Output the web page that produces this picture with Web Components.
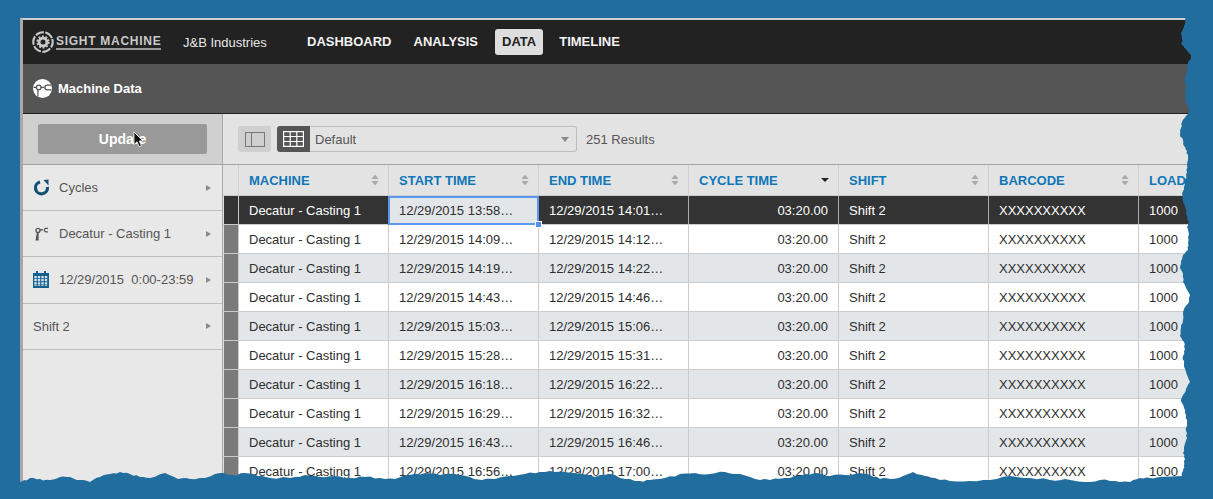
<!DOCTYPE html>
<html>
<head>
<meta charset="utf-8">
<title>Machine Data</title>
<style>
html, body { margin: 0; height: 499px; overflow: hidden; background: #216d9e; }
body { font-family: "Liberation Sans", Arial, sans-serif; font-size: 13px; position: relative; }
</style>
</head>
<body>
<sm-app></sm-app>

<script>
const SORT_ARROWS = `<svg width="8" height="12" viewBox="0 0 8 12"><path d="M4 0.5 L7.5 5 H0.5 Z M4 11.5 L0.5 7 H7.5 Z" fill="#a9a9a9"/></svg>`;

class SmTopbar extends HTMLElement {
  constructor() {
    super();
    this.attachShadow({ mode: "open" });
    this.shadowRoot.innerHTML = `
  <style>
:host { display: flex; align-items: center; height: 44px; background: #222; color: #fff; }
.logo { display: flex; align-items: center; box-sizing: border-box; padding-left: 9px; width: 160px; }
.logo svg { flex: none; }
.brand {
	margin-left: 2px;
	font-size: 12px;
	font-weight: 700;
	letter-spacing: 0.72px;
	line-height: 13px;
	color: #c9c9c9;
	border-bottom: 2px solid #9a9a9a;
	white-space: nowrap;
}
.org { width: 118px; font-size: 13px; color: #e6e6e6; white-space: nowrap; }
nav { display: flex; align-items: center; gap: 10px; }
nav a { font-weight: 700; font-size: 13px; color: #f2f2f2; padding: 5px 6px; line-height: 16px; border-radius: 3px; }
nav a.on { background: #dedede; color: #222; padding: 5px 7px; margin-left: 1px; }
  </style>
  <div class="logo">
    <svg width="22" height="22" viewBox="0 0 22 22" fill="none">
      <circle cx="11" cy="11" r="9.7" stroke="#c9c9c9" stroke-width="2.1" stroke-dasharray="8.7 1.46" transform="rotate(-18 11 11)"/>
      <circle cx="11" cy="11" r="3.9" stroke="#c9c9c9" stroke-width="2.8"/>
      <circle cx="11" cy="11" r="5.7" stroke="#c9c9c9" stroke-width="1.8" stroke-dasharray="2 1.58"/>
    </svg>
    <span class="brand">SIGHT MACHINE</span>
  </div>
  <span class="org">J&amp;B Industries</span>
  <nav>
    <a>DASHBOARD</a>
    <a>ANALYSIS</a>
    <a class="on">DATA</a>
    <a>TIMELINE</a>
  </nav>
`;
  }
}

class SmSubbar extends HTMLElement {
  constructor() {
    super();
    this.attachShadow({ mode: "open" });
    this.shadowRoot.innerHTML = `
  <style>
:host {
	display: flex;
	align-items: center;
	gap: 6px;
	box-sizing: border-box;
	height: 50px;
	padding-left: 10px;
	background: #555;
	border-bottom: 1px solid #1e1e1e;
	color: #fff;
	font-weight: 700;
	font-size: 13px;
}
  </style>
  <svg width="19" height="19" viewBox="0 0 19 19">
    <circle cx="9.5" cy="9.5" r="9.5" fill="#fff"/>
    <path d="M0.6 8.4 H3.4 M8 8.4 H11.4" fill="none" stroke="#555" stroke-width="1.2"/>
    <circle cx="5.7" cy="8.4" r="2.3" fill="#fff" stroke="#555" stroke-width="1.2"/>
    <path d="M4.9 10.8 V17.5" fill="none" stroke="#555" stroke-width="1.2"/>
    <path d="M18.4 6.2 H14.2 A2.3 2.3 0 0 0 14.2 10.8 H18.4" fill="none" stroke="#555" stroke-width="1.3"/>
  </svg>
  <slot></slot>
`;
  }
}

class SmSideItem extends HTMLElement {
  constructor() {
    super();
    this.attachShadow({ mode: "open" });
    this.shadowRoot.innerHTML = `
  <style>
:host {
	display: flex;
	align-items: center;
	box-sizing: border-box;
	height: 46.2px;
	padding: 0 11px 0 10px;
	border-bottom: 1px solid #bdbdbd;
	color: #555;
	font-size: 13px;
}
.ico { display: flex; width: 26px; flex: none; }
.ico.none { display: none; }
.txt { flex: 1; white-space: nowrap; }
.arrow { width: 0; height: 0; border-left: 5px solid #8a8a8a; border-top: 3.5px solid transparent; border-bottom: 3.5px solid transparent; }
  </style>
  <span class="ico"><slot name="icon"></slot></span>
  <span class="txt"><slot></slot></span>
  <span class="arrow"></span>
`;
    const slot = this.shadowRoot.querySelector('slot[name="icon"]');
    if (!this.querySelector('[slot="icon"]')) slot.parentElement.classList.add("none");
  }
}

class SmSidebar extends HTMLElement {
  constructor() {
    super();
    this.attachShadow({ mode: "open" });
    this.shadowRoot.innerHTML = `
  <style>
:host { display: block; box-sizing: border-box; width: 200px; flex: none; background: #e8e8e8; border-right: 1px solid #a9a9a9; }
.top { box-sizing: border-box; height: 51px; padding: 10px 15px; background: #d0d0d0; border-bottom: 1px solid #a3a3a3; }
.update {
	display: flex;
	align-items: center;
	justify-content: center;
	position: relative;
	height: 30px;
	background: #999;
	border-radius: 2px;
	color: #fff;
	font-weight: 700;
	font-size: 14px;
}
.cursor { position: absolute; left: 95px; top: 7px; }
  </style>
  <div class="top">
    <div class="update">Update
      <svg class="cursor" width="12" height="17" viewBox="0 0 12 17">
        <path d="M1 1 V13.5 L4 10.8 L6.2 15.6 L8.4 14.6 L6.2 10 H10 Z" fill="#111" stroke="#fff" stroke-width="0.8"/>
      </svg>
    </div>
  </div>
  <slot></slot>
`;
  }
}

class SmToolbar extends HTMLElement {
  constructor() {
    super();
    this.attachShadow({ mode: "open" });
    this.shadowRoot.innerHTML = `
  <style>
:host {
	display: flex;
	align-items: center;
	box-sizing: border-box;
	height: 51px;
	padding: 0 0 0 15px;
	background: #e3e3e3;
	border-bottom: 1px solid #a3a3a3;
	color: #555;
	font-size: 13px;
}
.toggle { display: flex; align-items: center; justify-content: center; width: 33px; height: 26px; background: #cfcfcf; border-radius: 3px; }
.select { display: flex; align-items: center; height: 26px; margin-left: 6px; }
.grid { display: flex; align-items: center; justify-content: center; width: 33px; height: 26px; background: #555; border-radius: 3px 0 0 3px; }
.field {
	display: flex;
	align-items: center;
	justify-content: space-between;
	box-sizing: border-box;
	width: 267px;
	height: 26px;
	padding: 1px 7px 0 5px;
	border: 1px solid #bdbdbd;
	border-left: 0;
	border-radius: 0 3px 3px 0;
}
.caret { width: 0; height: 0; border-top: 5px solid #8a8a8a; border-left: 4.5px solid transparent; border-right: 4.5px solid transparent; }
.count { margin-left: 9px; padding-top: 1px; }
  </style>
  <span class="toggle">
    <svg width="20" height="15" viewBox="0 0 20 15" fill="none" stroke="#777"><rect x="0.5" y="0.5" width="19" height="14"/><path d="M6.5 0.5 V14.5"/></svg>
  </span>
  <span class="select">
    <span class="grid">
      <svg width="21" height="16" viewBox="0 0 21 16" fill="none" stroke="#fff" stroke-width="1.2"><rect x="0.6" y="0.6" width="19.8" height="14.8"/><path d="M7.2 0.6 V15.4 M13.8 0.6 V15.4 M0.6 5.5 H20.4 M0.6 10.5 H20.4"/></svg>
    </span>
    <span class="field">Default<span class="caret"></span></span>
  </span>
  <span class="count">251 Results</span>
`;
  }
}

class SmTable extends HTMLElement {
  constructor() {
    super();
    this.attachShadow({ mode: "open" });
  }

  connectedCallback() {
    const times = [
      ["13:58", "14:01"], ["14:09", "14:12"], ["14:19", "14:22"], ["14:43", "14:46"], ["15:03", "15:06"],
      ["15:28", "15:31"], ["16:18", "16:22"], ["16:29", "16:32"], ["16:43", "16:46"], ["16:56", "17:00"],
    ];
    const heads = ["MACHINE", "START TIME", "END TIME", "CYCLE TIME", "SHIFT", "BARCODE", "LOAD"];

    const head = heads.map((h) => {
      let mark = SORT_ARROWS;
      if (h === "CYCLE TIME") mark = `<span class="down"></span>`;
      if (h === "LOAD") mark = "";
      return `<div class="th">${h}${mark}</div>`;
    }).join("");

    const rows = times.map((t, i) => `
      <div class="row ${i === 0 ? "sel" : i % 2 === 0 ? "alt" : ""}">
        <div class="ind"></div>
        <div class="td">Decatur - Casting 1</div>
        <div class="td ${i === 0 ? "focus" : ""}">12/29/2015 ${t[0]}…${i === 0 ? '<i class="handle"></i>' : ""}</div>
        <div class="td">12/29/2015 ${t[1]}…</div>
        <div class="td num">03:20.00</div>
        <div class="td">Shift 2</div>
        <div class="td">XXXXXXXXXX</div>
        <div class="td">1000</div>
      </div>`).join("");

    this.shadowRoot.innerHTML = `
  <style>
:host { display: block; font-size: 13px; color: #2e2e2e; }
.head, .row { display: grid; grid-template-columns: 16px repeat(6, 150px) 100px; }
.head { height: 31px; background: #e3e3e3; border-bottom: 1px solid #ccc; box-sizing: border-box; }
.corner { border-right: 1px solid #d0d0d0; }
.th {
	display: flex;
	align-items: center;
	justify-content: space-between;
	box-sizing: border-box;
	padding: 0 9px 0 10px;
	border-right: 1px solid #d0d0d0;
	color: #0f77b8;
	font-weight: 700;
	white-space: nowrap;
}
.down { width: 0; height: 0; border-top: 4px solid #222; border-left: 4px solid transparent; border-right: 4px solid transparent; }
.row { box-sizing: border-box; height: 29px; background: #fff; border-bottom: 1px solid #ccc; }
.row.alt { background: #e3e6e9; }
.row.sel { background: #333; color: #fff; border-bottom-color: #ccc; }
.ind { background: #7a7a7a; border-left: 1px solid #ddd; border-right: 1px solid #ccc; }
.row.sel .ind { background: #333; }
.td {
	display: flex;
	align-items: center;
	box-sizing: border-box;
	padding: 0 10px;
	border-right: 1px solid #ccc;
	white-space: nowrap;
}
.row.sel .td { border-right-color: #aaa; }
.td.num { justify-content: flex-end; }
.row .td.focus {
	position: relative;
	background: #e3e6e9;
	color: #2e2e2e;
	border: 2px solid #5b96f0;
	padding: 0 9px;
	margin: 0 0 -1px -1px;
}
.handle { position: absolute; right: -5px; bottom: -5px; width: 5px; height: 5px; background: #4f8ff0; border: 1px solid #fff; }
  </style>
  <div class="head"><div class="corner"></div>${head}</div>
  ${rows}
`;
  }
}

// torn paper edge, points traced from the picture, then roughened
class SmTornEdge extends HTMLElement {
  constructor() {
    super();
    this.attachShadow({ mode: "open" });
    const right = [[1185,16],[1185,24],[1183,29],[1181,34],[1182,39],[1182,45],[1186,49],[1190,54],[1191,58],[1188,63],[1187,70],[1185,78],[1186,86],[1185,94],[1186,102],[1189,108],[1189,111],[1186,116],[1182,122],[1181,128],[1180,135],[1183,140],[1184,146],[1187,151],[1188,157],[1187,165],[1187,172],[1185,180],[1184,187],[1182,194],[1183,200],[1185,207],[1186,214],[1189,222],[1187,227],[1189,234],[1188,243],[1188,250],[1183,255],[1181,261],[1180,268],[1183,274],[1183,282],[1186,288],[1190,295],[1189,302],[1185,307],[1183,314],[1183,320],[1181,328],[1180,336],[1184,342],[1185,349],[1183,356],[1184,364],[1186,372],[1190,382],[1186,389],[1183,395],[1181,401],[1184,408],[1186,415],[1187,423],[1186,431],[1187,438],[1184,447],[1183,453],[1185,459],[1184,466],[1183,471],[1182,476]];
    const bottom = [[1160,477],[1150,478],[1140,478],[1130,482],[1115,481],[1100,480],[1085,482],[1065,479],[1050,480],[1030,478],[1010,476],[990,480],[970,481],[950,481],[935,478],[925,476],[913,472],[903,476],[890,479],[880,479],[870,475],[860,473],[845,475],[830,476],[815,473],[800,476],[785,478],[770,480],[755,479],[740,474],[725,472],[710,474],[695,473],[680,474],[665,478],[650,480],[640,481],[625,479],[610,474],[595,477],[575,473],[555,472],[540,472],[525,474],[510,476],[495,479],[482,480],[470,477],[455,474],[440,475],[425,473],[410,475],[395,479],[380,478],[365,477],[350,478],[335,476],[320,477],[305,475],[290,478],[270,478],[258,476],[245,473],[232,475],[220,473],[205,478],[190,479],[178,479],[165,473],[150,478],[140,477],[130,474],[120,472],[110,474],[100,477],[90,482],[80,480],[70,477],[60,477],[50,480],[40,479],[30,478],[24,480],[20,482]];
    let seed = 7;
    const noise = () => {
      seed = (seed * 16807) % 2147483647;
      return (seed % 1000) / 1000 - 0.5;
    };
    const rough = (list, ax) => {
      const out = [];
      list.forEach((p, i) => {
        out.push(p);
        const q = list[i + 1];
        if (!q) return;
        for (let k = 1; k < 3; k++) {
          const x = p[0] + ((q[0] - p[0]) * k) / 3;
          const y = p[1] + ((q[1] - p[1]) * k) / 3;
          out.push(ax === "x" ? [(x + noise() * 1.6).toFixed(1), y.toFixed(1)] : [x.toFixed(1), (y + noise() * 2.2).toFixed(1)]);
        }
      });
      return out;
    };
    const pts = [...rough(right, "x"), ...rough(bottom, "y"), [20,499], [1213,499], [1213,16]].map((p) => p.join(",")).join(" ");
    this.shadowRoot.innerHTML = `
  <style>
:host { position: absolute; left: 0; top: 0; width: 1213px; height: 499px; pointer-events: none; }
svg { display: block; }
  </style>
  <svg width="1213" height="499" viewBox="0 0 1213 499"><polygon points="${pts}" fill="#216d9e"/></svg>
`;
  }
}

class SmApp extends HTMLElement {
  constructor() {
    super();
    this.attachShadow({ mode: "open" });
    this.shadowRoot.innerHTML = `
  <style>
:host { display: block; box-sizing: border-box; height: 499px; padding: 18px 0 0 20px; }
.window { box-sizing: border-box; height: 481px; width: 1193px; overflow: hidden; border-top: 2px solid #cfcfcf; border-left: 3px solid #a8a8a8; }
.main { display: flex; }
.content { flex: 1; min-width: 0; background: #fff; }
  </style>
  <div class="window">
    <sm-topbar></sm-topbar>
    <sm-subbar>Machine Data</sm-subbar>
    <div class="main">
      <sm-sidebar>
        <sm-side-item>
          <svg slot="icon" width="17" height="17" viewBox="0 0 17 17"><path d="M7 3 A6 6 0 1 0 14.4 8" fill="none" stroke="#14506f" stroke-width="3.2"/><path d="M10.5 1 L15.5 0.5 V6.5 Z" fill="#14506f"/></svg>
          Cycles
        </sm-side-item>
        <sm-side-item>
          <svg slot="icon" width="16" height="14" viewBox="0 0 16 14" fill="none" stroke="#555"><circle cx="5" cy="3.4" r="2" stroke-width="1.3"/><path d="M4 5 L2.4 13.5 H5.6 L5.6 5 Z" fill="#555" stroke="none"/><path d="M7 3 L10 2.6" stroke-width="1.4"/><path d="M15 1.4 H13 A1.7 1.7 0 0 0 13 4.8 H15" stroke-width="1.2"/></svg>
          Decatur - Casting 1
        </sm-side-item>
        <sm-side-item>
          <svg slot="icon" width="16" height="17" viewBox="0 0 16 17"><path d="M0 2 H3 V0 H5 V2 H11 V0 H13 V2 H16 V17 H0 Z" fill="#14608f"/><path d="M2.5 5 V15 M6 5 V15 M9.5 5 V15 M13 5 V15" stroke="#d6e4ec" stroke-width="2.4" stroke-dasharray="2.2 0.9" fill="none"/></svg>
          12/29/2015&nbsp; 0:00-23:59
        </sm-side-item>
        <sm-side-item>Shift 2</sm-side-item>
      </sm-sidebar>
      <div class="content">
        <sm-toolbar></sm-toolbar>
        <sm-table></sm-table>
      </div>
    </div>
  </div>
  <sm-torn-edge></sm-torn-edge>
`;
  }
}

customElements.define("sm-topbar", SmTopbar);
customElements.define("sm-subbar", SmSubbar);
customElements.define("sm-side-item", SmSideItem);
customElements.define("sm-sidebar", SmSidebar);
customElements.define("sm-toolbar", SmToolbar);
customElements.define("sm-table", SmTable);
customElements.define("sm-torn-edge", SmTornEdge);
customElements.define("sm-app", SmApp);
</script>
</body>
</html>
